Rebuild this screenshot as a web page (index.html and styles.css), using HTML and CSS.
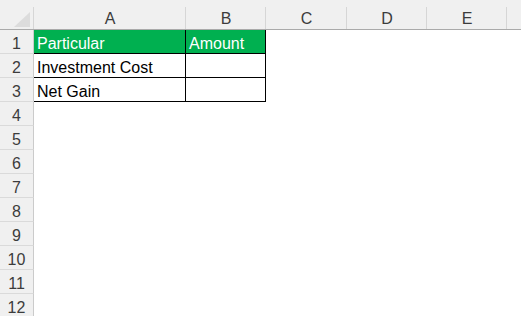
FILE: index.html
```html
<!DOCTYPE html>
<html lang="en">

<head>
  <meta charset="UTF-8">
  <meta name="viewport" content="width=device-width, initial-scale=1.0">
  <title>Sheet</title>
  <link rel="stylesheet" href="styles.css">
</head>

<body>
  <div class="sheet">
    <!-- column headers -->
    <div class="corner">
      <svg class="corner__mark" width="34" height="30" viewBox="0 0 34 30">
        <polygon points="30,12 30,27 14,27" fill="#dcdcdc" />
      </svg>
    </div>
    <div class="col-head">A</div>
    <div class="col-head">B</div>
    <div class="col-head">C</div>
    <div class="col-head">D</div>
    <div class="col-head">E</div>
    <div class="col-head col-head--last"></div>

    <!-- row 1 -->
    <div class="row-head">1</div>
    <div class="cell cell--green cell--box">Particular</div>
    <div class="cell cell--green cell--box">Amount</div>
    <div class="cell"></div>
    <div class="cell"></div>
    <div class="cell"></div>
    <div class="cell"></div>

    <!-- row 2 -->
    <div class="row-head">2</div>
    <div class="cell cell--box">Investment Cost</div>
    <div class="cell cell--box"></div>
    <div class="cell"></div>
    <div class="cell"></div>
    <div class="cell"></div>
    <div class="cell"></div>

    <!-- row 3 -->
    <div class="row-head">3</div>
    <div class="cell cell--box">Net Gain</div>
    <div class="cell cell--box"></div>
    <div class="cell"></div>
    <div class="cell"></div>
    <div class="cell"></div>
    <div class="cell"></div>

    <div class="row-head">4</div>
    <div class="cell blank"></div>
    <div class="row-head">5</div>
    <div class="cell blank"></div>
    <div class="row-head">6</div>
    <div class="cell blank"></div>
    <div class="row-head">7</div>
    <div class="cell blank"></div>
    <div class="row-head">8</div>
    <div class="cell blank"></div>
    <div class="row-head">9</div>
    <div class="cell blank"></div>
    <div class="row-head">10</div>
    <div class="cell blank"></div>
    <div class="row-head">11</div>
    <div class="cell blank"></div>
    <div class="row-head">12</div>
    <div class="cell blank"></div>
  </div>
</body>

</html>
```

FILE: styles.css
```css
html,
body {
  margin: 0;
  height: 100%;
  overflow: hidden;
  background-color: #fff;
}

body {
  font-family: "Liberation Sans", Arial, sans-serif;
  font-size: 16px;
}

/* 表格整体: 行号列 + A~E + 剩余 */
.sheet {
  display: grid;
  grid-template-columns: 34px 152px 80px 81px 80px 80px 1fr;
  grid-template-rows: 30px;
  grid-auto-rows: 24px;
}

.sheet > div {
  box-sizing: border-box;
  min-width: 0;
}

.corner,
.col-head {
  background: linear-gradient(#d6d6d6, #d6d6d6) right 7px / 1px 22px no-repeat, #f0f0f0;
  border-bottom: 1px solid #aaaaaa;
}

.corner__mark {
  display: block;
}

.col-head {
  display: flex;
  align-items: flex-end;
  justify-content: center;
  padding-bottom: 1px;
  color: #3c3c3c;
}

.col-head--last {
  background: #f0f0f0;
}

.row-head {
  background-color: #f0f0f0;
  border-right: 1px solid #cbcbcb;
  border-bottom: 1px solid #dadada;
  padding-top: 3px;
  line-height: 21px;
  text-align: center;
  color: #3c3c3c;
}

.cell {
  padding: 3px 3px 0;
  line-height: 21px;
  white-space: nowrap;
  color: #000;
}

.blank {
  grid-column: 2 / -1;
}

.cell--green {
  background-color: #00b050;
  color: #fff;
}

.cell--box {
  border-right: 1px solid #000;
  border-bottom: 1px solid #000;
}
```
